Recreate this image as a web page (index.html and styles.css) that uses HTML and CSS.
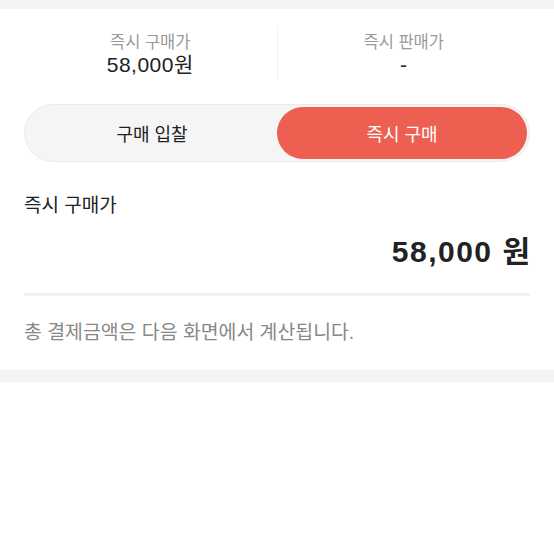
FILE: index.html
```html
<!DOCTYPE html>
<html lang="ko">
<head>
    <meta charset="UTF-8">
    <meta name="viewport" content="width=device-width, initial-scale=1.0">
    <title>즉시 구매</title>
    <link rel="stylesheet" href="styles.css">
</head>
<body>
    <div class="band"></div>

    <div class="panel">
        <div class="summary">
            <div class="summary-col">
                <div class="summary-label">즉시 구매가</div>
                <div class="summary-value">58,000원</div>
            </div>
            <div class="summary-col">
                <div class="summary-label">즉시 판매가</div>
                <div class="summary-value">-</div>
            </div>
        </div>

        <div class="toggle">
            <button class="toggle-btn">구매 입찰</button>
            <button class="toggle-btn active">즉시 구매</button>
        </div>

        <div class="price-title">즉시 구매가</div>
        <div class="price"><span class="price-num">58,000 원</span></div>

        <div class="note">총 결제금액은 다음 화면에서 계산됩니다.</div>
    </div>

    <div class="band band-bottom"></div>
</body>
</html>
```

FILE: styles.css
```css
body {
    margin: 0;
    font-family: "Liberation Sans", "Noto Sans CJK KR", sans-serif;
    background: #fff;
    color: #222;
}
.band {
    height: 9px;
    background-color: #f4f4f4;
}
.band-bottom {
    height: 12px;
}
.panel {
    padding: 0 24px 25px;
}
.summary {
    display: flex;
    padding-top: 18px;
}
.summary-col {
    flex: 1;
    text-align: center;
    padding: 4px 0 3px;
}
.summary-col + .summary-col {
    border-left: 1px solid #f2f2f2;
}
.summary-label {
    font-size: 16.5px;
    line-height: 22px;
    color: #9a9a9a;
}
.summary-value {
    font-size: 21px;
    letter-spacing: 0.5px;
    line-height: 24px;
    color: #222;
}
.toggle {
    display: flex;
    margin-top: 24px;
    height: 58px;
    box-sizing: border-box;
    padding: 2px;
    border: 1px solid #ececec;
    border-radius: 29px;
    background-color: #f5f5f5;
}
.toggle-btn {
    flex: 1;
    border: none;
    background: none;
    border-radius: 27px;
    font-family: inherit;
    font-size: 18px;
    color: #222;
    padding: 0;
}
.toggle-btn.active {
    background-color: #ec5f51;
    color: #fff;
}
.price-title {
    margin-top: 31px;
    font-size: 19px;
    line-height: 26px;
}
.price {
    margin-top: 16px;
    text-align: right;
    font-size: 30px;
    font-weight: bold;
    letter-spacing: 1.5px;
    line-height: 34px;
    padding-bottom: 24px;
    border-bottom: 3px solid #efefef;
}
.price-num {
    margin-right: -1.5px;
}
.note {
    margin-top: 23px;
    font-size: 19.4px;
    line-height: 26px;
    color: #888;
}
```
